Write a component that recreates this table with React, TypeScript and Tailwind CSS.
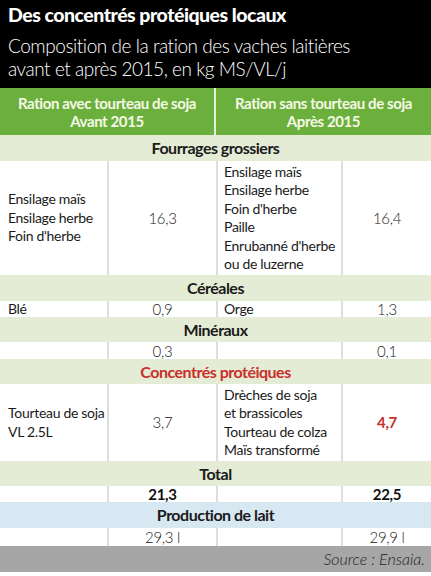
const font = { fontFamily: 'Lato, "Open Sans", sans-serif' }

type Row = {
  left: string[]
  leftValue: string
  right: string[]
  rightValue: string
  bold?: boolean
  redRight?: boolean
  tall?: boolean
}

function Band({ title, tone, h = 'h-[26px]' }: { title: string; tone: 'green' | 'red' | 'blue'; h?: string }) {
  const bg = tone === 'blue' ? 'bg-[#d8e8f3]' : 'bg-[#e5ecd5]'
  const color = tone === 'red' ? 'text-[#c8302b]' : 'text-[#1a1a1a]'
  return (
    <div className={`flex items-center justify-center ${h} ${bg}`}>
      <span className={`text-[16px] font-bold leading-none tracking-[-0.5px] ${color}`}>{title}</span>
    </div>
  )
}

function DataRow({ row, h }: { row: Row; h: string }) {
  const valueCls = row.bold
    ? 'font-bold text-[#111]'
    : 'font-light text-[#222]'
  const lineCls = row.tall ? 'leading-[18.5px]' : 'leading-[16px]'
  return (
    <div className={`grid grid-cols-[109px_109px_125px_1fr] bg-white text-[14px] tracking-[-0.3px] text-[#1a1a1a] ${h}`}>
      <div className={`flex flex-col justify-center whitespace-nowrap border-r-2 border-[#dedede] pl-2 ${lineCls}`}>
        {row.left.map((l) => (
          <span key={l}>{l}</span>
        ))}
      </div>
      <div className={`flex items-center justify-center border-r-2 border-[#dedede] text-[15px] ${lineCls} ${valueCls}`}>
        {row.leftValue}
      </div>
      <div className={`flex flex-col justify-center whitespace-nowrap border-r-2 border-[#dedede] pl-[6px] ${lineCls}`}>
        {row.right.map((l) => (
          <span key={l}>{l}</span>
        ))}
      </div>
      <div
        className={`flex items-center justify-center text-[15px] ${lineCls} ${
          row.redRight ? 'font-bold text-[#c8302b]' : valueCls
        }`}
      >
        {row.rightValue}
      </div>
    </div>
  )
}

export default function App() {
  return (
    <div className="h-[576px] w-[431px] overflow-hidden bg-white" style={font}>
      <div className="bg-black px-2 pt-[2px] pb-[8px] text-white">
        <h1 className="text-[19.5px] font-black leading-[26px] tracking-[-0.5px]">
          Des concentrés protéiques locaux
        </h1>
        <p className="mt-[6px] text-[19px] font-light leading-[23px] tracking-[-0.45px]">
          Composition de la ration des vaches laitières
          <br />
          avant et après 2015, en kg MS/VL/j
        </p>
      </div>

      <div className="grid h-[47px] grid-cols-[216px_1fr] bg-[#6bb03d] text-[15px] font-bold leading-[18px] tracking-[-0.4px] text-[#f6f8e6]">
        <div className="flex flex-col items-center justify-center border-r-2 border-[#e6eed8]">
          <span>Ration avec tourteau de soja</span>
          <span>Avant 2015</span>
        </div>
        <div className="flex flex-col items-center justify-center">
          <span>Ration sans tourteau de soja</span>
          <span>Après 2015</span>
        </div>
      </div>

      <Band title="Fourrages grossiers" tone="green" />
      <DataRow
        h="h-[114px]"
        row={{
          left: ['Ensilage maïs', 'Ensilage herbe', "Foin d'herbe"],
          leftValue: '16,3',
          right: ['Ensilage maïs', 'Ensilage herbe', "Foin d'herbe", 'Paille', "Enrubanné d'herbe", 'ou de luzerne'],
          rightValue: '16,4',
          tall: true,
        }}
      />

      <Band title="Céréales" tone="green" />
      <DataRow h="h-[16px]" row={{ left: ['Blé'], leftValue: '0,9', right: ['Orge'], rightValue: '1,3' }} />

      <Band title="Minéraux" tone="green" h="h-[25px]" />
      <DataRow h="h-[17px]" row={{ left: [], leftValue: '0,3', right: [], rightValue: '0,1' }} />

      <Band title="Concentrés protéiques" tone="red" h="h-[25px]" />
      <DataRow
        h="h-[77px]"
        row={{
          left: ['Tourteau de soja', 'VL 2.5L'],
          leftValue: '3,7',
          right: ['Drèches de soja', 'et brassicoles', 'Tourteau de colza', 'Maïs transformé'],
          rightValue: '4,7',
          redRight: true,
          tall: true,
        }}
      />

      <Band title="Total" tone="green" h="h-[25px]" />
      <DataRow h="h-[16px]" row={{ left: [], leftValue: '21,3', right: [], rightValue: '22,5', bold: true }} />

      <Band title="Production de lait" tone="blue" />
      <DataRow h="h-[18px]" row={{ left: [], leftValue: '29,3 l', right: [], rightValue: '29,9 l' }} />

      <div className="flex h-[26px] items-center justify-end bg-[#a6a6a6] pr-[6px]">
        <span className="text-[16px] font-light italic text-[#222]">Source : Ensaia.</span>
      </div>
    </div>
  )
}
